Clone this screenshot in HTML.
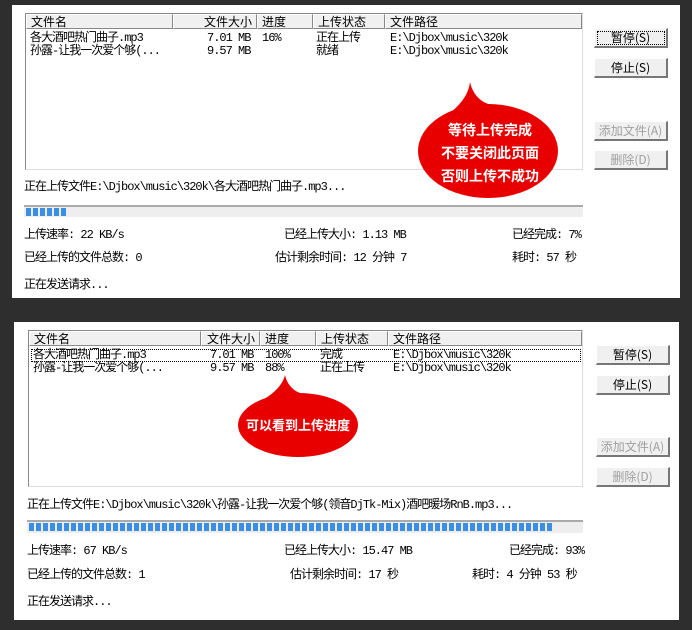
<!DOCTYPE html>
<html><head><meta charset="utf-8"><style>
*{margin:0;padding:0;box-sizing:border-box}
body{width:692px;height:630px;background:#2e2e2e;position:relative;overflow:hidden;font-family:"Liberation Mono","Noto Sans CJK SC",monospace;font-size:12px;letter-spacing:-1px;color:#000}
.panel{position:absolute;background:#fff}
.abs{position:absolute;white-space:nowrap;line-height:13px}
.list{position:absolute;border:1px solid #888;border-right-color:#ddd;border-bottom-color:#ddd;background:#fff}
.hd{position:absolute;top:0;height:15px;background:#f0f0f0;border:1px solid #fff;border-right-color:#888;border-bottom-color:#888;line-height:13px;padding-left:4px;font-family:"Noto Sans CJK SC",sans-serif;font-size:12px;letter-spacing:0}
.btn{position:absolute;width:74px;height:20px;background:#f0f0f0;border:1px solid #fff;border-right:2px solid #777;border-bottom:2px solid #777;text-align:center;line-height:17px;font-family:"Noto Sans CJK SC",sans-serif;font-size:12px;letter-spacing:0}
.dis{color:#a0a0a0}
.bar{position:absolute;background:#eee;border-top:2px solid #aaa}
.blk{position:absolute;top:2px;height:8px;background:repeating-linear-gradient(90deg,#3a8ee6 0 5px,#eee 5px 7px)}
.bub{position:absolute;color:#fff;font-weight:bold;font-family:"Noto Sans CJK SC",sans-serif;font-size:14px;letter-spacing:0;text-align:center;line-height:23px}
</style></head><body>
<div class="panel" style="left:12px;top:5px;width:668px;height:293px"></div>
<div class="panel" style="left:14px;top:322px;width:665px;height:298px"></div>

<div class="list" style="left:25px;top:13px;width:558px;height:157px">
<div class="hd" style="left:0;width:147px">文件名</div>
<div class="hd" style="left:147px;width:84px;text-align:right;padding-right:4px">文件大小</div>
<div class="hd" style="left:231px;width:56px">进度</div>
<div class="hd" style="left:287px;width:72px">上传状态</div>
<div class="hd" style="left:359px;width:197px">文件路径</div>
</div>
<div class="abs" style="left:30px;top:32px">各大酒吧热门曲子.mp3</div>
<div class="abs" style="left:30px;top:45px">孙露-让我一次爱个够(...</div>
<div class="abs" style="left:207px;top:32px">7.01 MB</div>
<div class="abs" style="left:207px;top:45px">9.57 MB</div>
<div class="abs" style="left:262px;top:32px">16%</div>
<div class="abs" style="left:316px;top:32px">正在上传</div>
<div class="abs" style="left:316px;top:45px">就绪</div>
<div class="abs" style="left:390px;top:32px">E:\Djbox\music\320k</div>
<div class="abs" style="left:390px;top:45px">E:\Djbox\music\320k</div>
<div class="btn" style="left:594px;top:28px;outline:1px dotted #000;outline-offset:-4px">暂停(S)</div>
<div class="btn" style="left:594px;top:58px">停止(S)</div>
<div class="btn dis" style="left:594px;top:121px">添加文件(A)</div>
<div class="btn dis" style="left:594px;top:150px">删除(D)</div>
<svg style="position:absolute;left:410px;top:78px" width="160" height="125"><ellipse cx="78" cy="73" rx="70" ry="47" fill="#e80000"/><path d="M60,4 C64,22 78,30 98,28 L60,50 L25,45 C42,35 58,22 60,4Z" fill="#e80000"/></svg>
<div class="bub" style="left:420px;top:119px;width:140px">等待上传完成<br>不要关闭此页面<br>否则上传不成功</div>
<div class="abs" style="left:24px;top:181px">正在上传文件E:\Djbox\music\320k\各大酒吧热门曲子.mp3...</div>
<div class="bar" style="left:24px;top:205px;width:559px;height:12px"><div class="blk" style="left:2px;width:42px;top:1px"></div></div>
<div class="abs" style="left:24px;top:229px">上传速率: 22 KB/s</div>
<div class="abs" style="left:284px;top:229px">已经上传大小: 1.13 MB</div>
<div class="abs" style="left:512px;top:229px">已经完成: 7%</div>
<div class="abs" style="left:24px;top:252px">已经上传的文件总数: 0</div>
<div class="abs" style="left:275px;top:252px">估计剩余时间:  12 分钟 7</div>
<div class="abs" style="left:512px;top:252px">耗时:  57 秒</div>
<div class="abs" style="left:24px;top:279px">正在发送请求...</div>

<div class="list" style="left:28px;top:330px;width:555px;height:157px">
<div class="hd" style="left:0;width:172px">文件名</div>
<div class="hd" style="left:172px;width:59px;text-align:right;padding-right:4px">文件大小</div>
<div class="hd" style="left:231px;width:56px">进度</div>
<div class="hd" style="left:287px;width:72px">上传状态</div>
<div class="hd" style="left:359px;width:194px">文件路径</div>
</div>
<div style="position:absolute;left:31px;top:349px;width:550px;height:13px;border:1px dotted #000"></div>
<div class="abs" style="left:33px;top:349px">各大酒吧热门曲子.mp3</div>
<div class="abs" style="left:33px;top:362px">孙露-让我一次爱个够(...</div>
<div class="abs" style="left:210px;top:349px">7.01 MB</div>
<div class="abs" style="left:210px;top:362px">9.57 MB</div>
<div class="abs" style="left:265px;top:349px">100%</div>
<div class="abs" style="left:265px;top:362px">88%</div>
<div class="abs" style="left:320px;top:349px">完成</div>
<div class="abs" style="left:320px;top:362px">正在上传</div>
<div class="abs" style="left:393px;top:349px">E:\Djbox\music\320k</div>
<div class="abs" style="left:393px;top:362px">E:\Djbox\music\320k</div>
<div class="btn" style="left:596px;top:345px">暂停(S)</div>
<div class="btn" style="left:596px;top:375px">停止(S)</div>
<div class="btn dis" style="left:596px;top:437px">添加文件(A)</div>
<div class="btn dis" style="left:596px;top:467px">删除(D)</div>
<svg style="position:absolute;left:230px;top:372px" width="140" height="90"><ellipse cx="68" cy="53" rx="60" ry="32" fill="#e80000"/><path d="M55,3 C58,16 68,24 85,23 L55,40 L25,32 C38,26 52,16 55,3Z" fill="#e80000"/></svg>
<div class="bub" style="left:238px;top:413px;width:120px;font-size:13px">可以看到上传进度</div>
<div class="abs" style="left:27px;top:499px">正在上传文件E:\Djbox\music\320k\孙露-让我一次爱个够(领音DjTk-Mix)酒吧暖场RnB.mp3...</div>
<div class="bar" style="left:27px;top:520px;width:556px;height:13px"><div class="blk" style="left:2px;width:524px;top:1px"></div></div>
<div class="abs" style="left:27px;top:545px">上传速率: 67 KB/s</div>
<div class="abs" style="left:284px;top:545px">已经上传大小: 15.47 MB</div>
<div class="abs" style="left:509px;top:545px">已经完成: 93%</div>
<div class="abs" style="left:27px;top:569px">已经上传的文件总数: 1</div>
<div class="abs" style="left:290px;top:569px">估计剩余时间:  17 秒</div>
<div class="abs" style="left:472px;top:569px">耗时:  4 分钟 53 秒</div>
<div class="abs" style="left:27px;top:596px">正在发送请求...</div>
</body></html>
